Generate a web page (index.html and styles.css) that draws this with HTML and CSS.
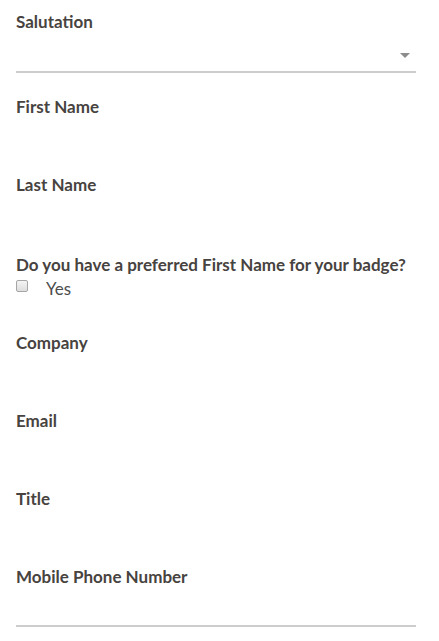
FILE: index.html
```html
<!DOCTYPE html>
<html lang="en">
<head>
<meta charset="utf-8">
<title>Registration</title>
<link rel="stylesheet" href="styles.css">
</head>
<body>
<form class="form">
  <div class="field field-select">
    <label class="label">Salutation</label>
    <div class="select">
      <span class="arrow"></span>
    </div>
  </div>
  <div class="field">
    <label class="label">First Name</label>
    <div class="input"></div>
  </div>
  <div class="field field-wide">
    <label class="label">Last Name</label>
    <div class="input"></div>
  </div>
  <div class="field field-check">
    <label class="label">Do you have a preferred First Name for your badge?</label>
    <div class="check-row">
      <span class="checkbox"></span>
      <span class="check-text">Yes</span>
    </div>
  </div>
  <div class="field">
    <label class="label">Company</label>
    <div class="input"></div>
  </div>
  <div class="field">
    <label class="label">Email</label>
    <div class="input"></div>
  </div>
  <div class="field">
    <label class="label">Title</label>
    <div class="input"></div>
  </div>
  <div class="field field-last">
    <label class="label">Mobile Phone Number</label>
    <div class="input input-underlined"></div>
  </div>
</form>
</body>
</html>
```
FILE: styles.css
```css
html, body {
  margin: 0;
  background: #ffffff;
}
body {
  padding: 12px 23px 0 16px;
  font-family: Lato, "Open Sans", sans-serif;
}
.form {
  display: flex;
  flex-direction: column;
}
.field {
  display: flex;
  flex-direction: column;
  margin-bottom: 24px;
}
.field-wide {
  margin-bottom: 26px;
}
.label {
  display: block;
  font-size: 17px;
  line-height: 20px;
  font-weight: 700;
  color: #474340;
  white-space: nowrap;
}
.input {
  height: 34px;
}
.select {
  position: relative;
  height: 39px;
  border-bottom: 2px solid #cccccc;
}
.arrow {
  position: absolute;
  right: 6px;
  top: 21px;
  width: 0;
  height: 0;
  border-left: 5px solid transparent;
  border-right: 5px solid transparent;
  border-top: 5px solid #8c8c8c;
}
.field-check {
  margin-bottom: 32px;
}
.check-row {
  display: flex;
  align-items: flex-start;
  padding-top: 2px;
  height: 24px;
}
.checkbox {
  box-sizing: border-box;
  width: 12px;
  height: 12px;
  border: 1px solid #a6a6a6;
  border-radius: 2px;
  background: linear-gradient(#f4f4f4, #dedede);
  margin-top: 3px;
  margin-right: 18px;
}
.check-text {
  font-size: 17px;
  line-height: 24px;
  color: #4d4d4d;
  font-weight: 400;
}
.input-underlined {
  height: 38px;
  border-bottom: 2px solid #cccccc;
}
```
